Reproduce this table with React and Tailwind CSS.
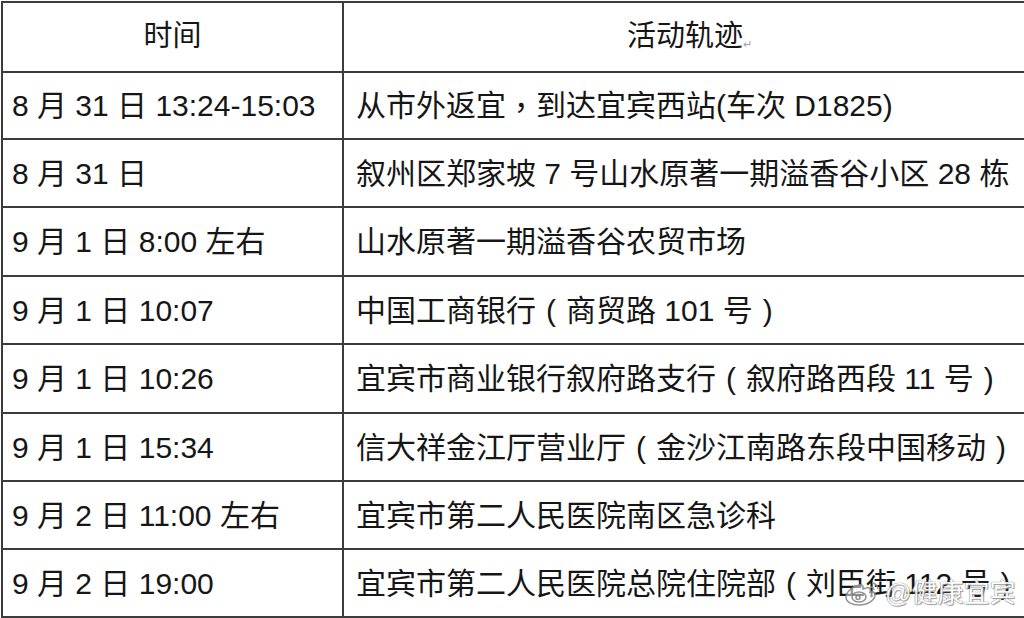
import React from 'react';

const rows = [
  { time: '8 月 31 日 13:24-15:03', place: '从市外返宜，到达宜宾西站(车次 D1825)', h: 'h-[67px]' },
  { time: '8 月 31 日', place: '叙州区郑家坡 7 号山水原著一期溢香谷小区 28 栋', h: 'h-[68px]' },
  { time: '9 月 1 日 8:00 左右', place: '山水原著一期溢香谷农贸市场', h: 'h-[69px]' },
  { time: '9 月 1 日 10:07', place: '中国工商银行（商贸路 101 号）', h: 'h-[68px]' },
  { time: '9 月 1 日 10:26', place: '宜宾市商业银行叙府路支行（叙府路西段 11 号）', h: 'h-[69px]' },
  { time: '9 月 1 日 15:34', place: '信大祥金江厅营业厅（金沙江南路东段中国移动）', h: 'h-[68px]' },
  { time: '9 月 2 日 11:00 左右', place: '宜宾市第二人民医院南区急诊科', h: 'h-[68px]' },
  { time: '9 月 2 日 19:00', place: '宜宾市第二人民医院总院住院部（刘臣街 112 号）', h: 'h-[68px]' },
];

const font = { fontFamily: '"Liberation Sans", "Noto Sans CJK SC", sans-serif' };
const punct = { fontFamily: '"Noto Sans CJK TC", sans-serif' };

// full-width punctuation sits centred in its em box in the source document
const Place = ({ text }) =>
  text.split(/([（），])/).map((part, i) => {
    if (part === '（' || part === '）')
      return (
        <span key={i} className="inline-block w-[1em] text-center">
          {part === '（' ? '(' : ')'}
        </span>
      );
    if (part === '，')
      return (
        <span key={i} style={punct}>{part}</span>
      );
    return <span key={i}>{part}</span>;
  });

const WeiboMark = () => (
  <svg width="40" height="26" viewBox="0 0 40 26" fill="none" stroke="#8a8a8a" strokeWidth="1.6">
    <path d="M16 5c-6 1-13 7-13 12 0 5 6 8 13 8 9 0 16-5 16-10 0-3-3-4-5-3 1-3 0-5-4-4-1 0-2 1-3 1 1-3-1-5-4-4z" fill="rgba(255,255,255,0.6)" />
    <ellipse cx="16" cy="17" rx="7" ry="5" />
    <circle cx="15" cy="17.5" r="2" />
    <path d="M29 3c3 0 6 3 6 6" />
    <path d="M28 7c1.5 0 2.8 1.2 2.8 2.8" />
  </svg>
);

const App = () => {
  return (
    <div className="relative w-[1024px] h-[618px] overflow-hidden bg-white text-[#161616]" style={font}>
      <div className="ml-[1px] mt-[1px] w-[1032px] border-l-2 border-t-2 border-[#3c3c3c]">
        {/* header */}
        <div className="flex h-[70px] border-b-2 border-[#3c3c3c]">
          <div className="w-[341px] shrink-0 border-r-2 border-[#3c3c3c] flex items-center justify-center text-[29px]">
            时间
          </div>
          <div className="flex-1 border-r-2 border-[#3c3c3c] flex items-center justify-center text-[29px]">
            <span className="pl-[4px]">活动轨迹</span>
            <span className="text-[11px] text-gray-400 self-center mt-[14px]">↵</span>
          </div>
        </div>
        {rows.map((r, i) => (
          <div key={i} className={`flex ${r.h} border-b-2 border-[#3c3c3c]`}>
            <div className="w-[341px] shrink-0 border-r-2 border-[#3c3c3c] flex items-center pl-[9px] text-[30px] whitespace-nowrap">
              {r.time}
            </div>
            <div className="flex-1 border-r-2 border-[#3c3c3c] flex items-center pl-[12px] text-[30px] whitespace-nowrap">
              <Place text={r.place} />
            </div>
          </div>
        ))}
      </div>

      {/* watermark */}
      <div className="absolute left-[843px] top-[580px] flex items-center gap-[2px] opacity-90">
        <WeiboMark />
        <span
          className="text-[26px] text-white leading-none"
          style={{ textShadow: '0 0 1px #777, 0 0 1px #777, 1px 1px 1px #999' }}
        >
          @健康宜宾
        </span>
      </div>
    </div>
  );
};

export default App;
